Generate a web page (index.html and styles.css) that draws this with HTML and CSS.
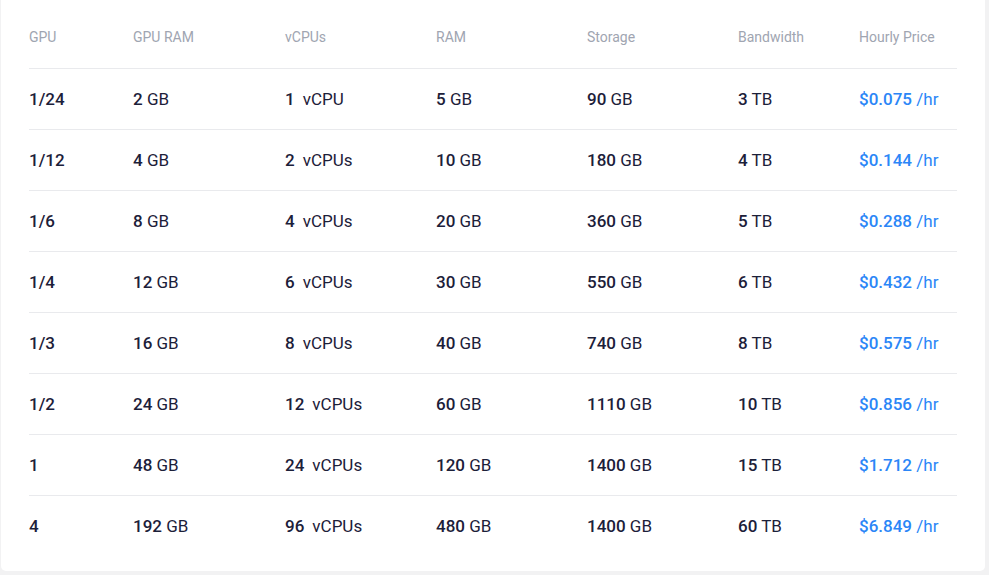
FILE: index.html
```html
<!DOCTYPE html>
<html lang="en">
<head>
<meta charset="utf-8">
<title>GPU Pricing</title>
<link rel="stylesheet" href="styles.css">
</head>
<body>
<div class="card">
  <div class="table">
    <div class="row head">
      <div class="cell">GPU</div>
      <div class="cell">GPU RAM</div>
      <div class="cell">vCPUs</div>
      <div class="cell">RAM</div>
      <div class="cell">Storage</div>
      <div class="cell">Bandwidth</div>
      <div class="cell">Hourly Price</div>
    </div>
    <div class="row">
      <div class="cell"><b>1/24</b></div>
      <div class="cell"><b>2</b> GB</div>
      <div class="cell"><b>1</b><span class="cpu">vCPU</span></div>
      <div class="cell"><b>5</b> GB</div>
      <div class="cell"><b>90</b> GB</div>
      <div class="cell"><b>3</b> TB</div>
      <div class="cell price"><b>$0.075</b> /hr</div>
    </div>
    <div class="row">
      <div class="cell"><b>1/12</b></div>
      <div class="cell"><b>4</b> GB</div>
      <div class="cell"><b>2</b><span class="cpu">vCPUs</span></div>
      <div class="cell"><b>10</b> GB</div>
      <div class="cell"><b>180</b> GB</div>
      <div class="cell"><b>4</b> TB</div>
      <div class="cell price"><b>$0.144</b> /hr</div>
    </div>
    <div class="row">
      <div class="cell"><b>1/6</b></div>
      <div class="cell"><b>8</b> GB</div>
      <div class="cell"><b>4</b><span class="cpu">vCPUs</span></div>
      <div class="cell"><b>20</b> GB</div>
      <div class="cell"><b>360</b> GB</div>
      <div class="cell"><b>5</b> TB</div>
      <div class="cell price"><b>$0.288</b> /hr</div>
    </div>
    <div class="row">
      <div class="cell"><b>1/4</b></div>
      <div class="cell"><b>12</b> GB</div>
      <div class="cell"><b>6</b><span class="cpu">vCPUs</span></div>
      <div class="cell"><b>30</b> GB</div>
      <div class="cell"><b>550</b> GB</div>
      <div class="cell"><b>6</b> TB</div>
      <div class="cell price"><b>$0.432</b> /hr</div>
    </div>
    <div class="row">
      <div class="cell"><b>1/3</b></div>
      <div class="cell"><b>16</b> GB</div>
      <div class="cell"><b>8</b><span class="cpu">vCPUs</span></div>
      <div class="cell"><b>40</b> GB</div>
      <div class="cell"><b>740</b> GB</div>
      <div class="cell"><b>8</b> TB</div>
      <div class="cell price"><b>$0.575</b> /hr</div>
    </div>
    <div class="row">
      <div class="cell"><b>1/2</b></div>
      <div class="cell"><b>24</b> GB</div>
      <div class="cell"><b>12</b><span class="cpu">vCPUs</span></div>
      <div class="cell"><b>60</b> GB</div>
      <div class="cell"><b>1110</b> GB</div>
      <div class="cell"><b>10</b> TB</div>
      <div class="cell price"><b>$0.856</b> /hr</div>
    </div>
    <div class="row">
      <div class="cell"><b>1</b></div>
      <div class="cell"><b>48</b> GB</div>
      <div class="cell"><b>24</b><span class="cpu">vCPUs</span></div>
      <div class="cell"><b>120</b> GB</div>
      <div class="cell"><b>1400</b> GB</div>
      <div class="cell"><b>15</b> TB</div>
      <div class="cell price"><b>$1.712</b> /hr</div>
    </div>
    <div class="row">
      <div class="cell"><b>4</b></div>
      <div class="cell"><b>192</b> GB</div>
      <div class="cell"><b>96</b><span class="cpu">vCPUs</span></div>
      <div class="cell"><b>480</b> GB</div>
      <div class="cell"><b>1400</b> GB</div>
      <div class="cell"><b>60</b> TB</div>
      <div class="cell price"><b>$6.849</b> /hr</div>
    </div>
  </div>
</div>
</body>
</html>
```

FILE: styles.css
```css
html, body {
  margin: 0;
  padding: 0;
  background: #f2f2f3;
}

body {
  font-family: Roboto, "Liberation Sans", Arial, sans-serif;
  color: #1c2039;
}

.card {
  width: 984px;
  margin: 0 0 0 1px;
  box-sizing: border-box;
  background: #ffffff;
  border-radius: 0 0 5px 5px;
  padding: 6px 28px 15px 28px;
}

.table {
  display: flex;
  flex-direction: column;
}

.row {
  display: grid;
  grid-template-columns: 104px 152px 151px 151px 151px 121px 98px;
  height: 60px;
  align-items: center;
  border-top: 1px solid #e9eaed;
  font-size: 17px;
}

.row.head {
  border-top: none;
  height: 62px;
  font-size: 14px;
  color: #a0a5b1;
}

.cell {
  white-space: nowrap;
}

.cell b {
  font-weight: 500;
}

.cpu {
  margin-left: 8px;
}

.price {
  color: #2b86f7;
}
```
